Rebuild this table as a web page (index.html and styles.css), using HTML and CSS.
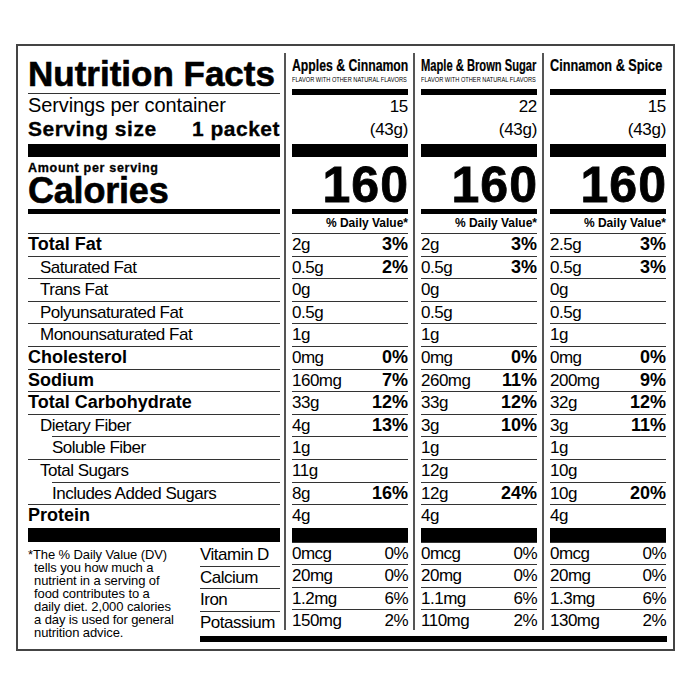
FILE: index.html
```html
<!DOCTYPE html>
<html lang="en">
<head>
<meta charset="utf-8">
<title>Nutrition Facts</title>
<link rel="stylesheet" href="styles.css">
</head>
<body>
<div class="page">
  <div class="label">
    <div class="left-top">
      <h1 class="title">Nutrition Facts</h1>
      <div class="servings">Servings per container</div>
      <div class="size"><span>Serving size</span><span>1 packet</span></div>
      <div class="bar-xl"></div>
      <div class="amount">Amount per serving</div>
      <div class="cal">Calories</div>
      <div class="bar-m"></div>
      <div class="dv-space"></div>
      <div class="row b">Total Fat</div>
      <div class="row i1">Saturated Fat</div>
      <div class="row i1">Trans Fat</div>
      <div class="row i1">Polyunsaturated Fat</div>
      <div class="row i1">Monounsaturated Fat</div>
      <div class="row b">Cholesterol</div>
      <div class="row b">Sodium</div>
      <div class="row b">Total Carbohydrate</div>
      <div class="row i1">Dietary Fiber</div>
      <div class="row i2">Soluble Fiber</div>
      <div class="row i1">Total Sugars</div>
      <div class="row i2">Includes Added Sugars</div>
      <div class="row b">Protein</div>
      <div class="bar-xl bar-end"></div>
    </div>

    <p class="foot">*The % Daily Value (DV)<br>tells you how much a<br>nutrient in a serving of<br>food contributes to a<br>daily diet. 2,000 calories<br>a day is used for general<br>nutrition advice.</p>

    <div class="vit-names">
      <div class="vrow">Vitamin D</div>
      <div class="vrow">Calcium</div>
      <div class="vrow">Iron</div>
      <div class="vrow">Potassium</div>
    </div>

    <div class="bottom-bar"></div>

    <div class="col col1">
      <div class="ch-title"><span>Apples &amp; Cinnamon</span></div>
      <div class="ch-sub"><span>FLAVOR WITH OTHER NATURAL FLAVORS</span></div>
      <div class="bar-s"></div>
      <div class="num">15</div>
      <div class="num">(43g)</div>
      <div class="bar-xl"></div>
      <div class="big">160</div>
      <div class="bar-m"></div>
      <div class="dv">% Daily Value*</div>
      <div class="row"><span>2g</span><b>3%</b></div>
      <div class="row"><span>0.5g</span><b>2%</b></div>
      <div class="row"><span>0g</span></div>
      <div class="row"><span>0.5g</span></div>
      <div class="row"><span>1g</span></div>
      <div class="row"><span>0mg</span><b>0%</b></div>
      <div class="row"><span>160mg</span><b>7%</b></div>
      <div class="row"><span>33g</span><b>12%</b></div>
      <div class="row"><span>4g</span><b>13%</b></div>
      <div class="row"><span>1g</span></div>
      <div class="row"><span>11g</span></div>
      <div class="row"><span>8g</span><b>16%</b></div>
      <div class="row"><span>4g</span></div>
      <div class="bar-xl bar-end"></div>
      <div class="vrow"><span>0mcg</span><span>0%</span></div>
      <div class="vrow"><span>20mg</span><span>0%</span></div>
      <div class="vrow"><span>1.2mg</span><span>6%</span></div>
      <div class="vrow"><span>150mg</span><span>2%</span></div>
    </div>

    <div class="col col2">
      <div class="ch-title"><span>Maple &amp; Brown Sugar</span></div>
      <div class="ch-sub"><span>FLAVOR WITH OTHER NATURAL FLAVORS</span></div>
      <div class="bar-s"></div>
      <div class="num">22</div>
      <div class="num">(43g)</div>
      <div class="bar-xl"></div>
      <div class="big">160</div>
      <div class="bar-m"></div>
      <div class="dv">% Daily Value*</div>
      <div class="row"><span>2g</span><b>3%</b></div>
      <div class="row"><span>0.5g</span><b>3%</b></div>
      <div class="row"><span>0g</span></div>
      <div class="row"><span>0.5g</span></div>
      <div class="row"><span>1g</span></div>
      <div class="row"><span>0mg</span><b>0%</b></div>
      <div class="row"><span>260mg</span><b>11%</b></div>
      <div class="row"><span>33g</span><b>12%</b></div>
      <div class="row"><span>3g</span><b>10%</b></div>
      <div class="row"><span>1g</span></div>
      <div class="row"><span>12g</span></div>
      <div class="row"><span>12g</span><b>24%</b></div>
      <div class="row"><span>4g</span></div>
      <div class="bar-xl bar-end"></div>
      <div class="vrow"><span>0mcg</span><span>0%</span></div>
      <div class="vrow"><span>20mg</span><span>0%</span></div>
      <div class="vrow"><span>1.1mg</span><span>6%</span></div>
      <div class="vrow"><span>110mg</span><span>2%</span></div>
    </div>

    <div class="col col3">
      <div class="ch-title"><span>Cinnamon &amp; Spice</span></div>
      <div class="ch-sub"></div>
      <div class="bar-s"></div>
      <div class="num">15</div>
      <div class="num">(43g)</div>
      <div class="bar-xl"></div>
      <div class="big">160</div>
      <div class="bar-m"></div>
      <div class="dv">% Daily Value*</div>
      <div class="row"><span>2.5g</span><b>3%</b></div>
      <div class="row"><span>0.5g</span><b>3%</b></div>
      <div class="row"><span>0g</span></div>
      <div class="row"><span>0.5g</span></div>
      <div class="row"><span>1g</span></div>
      <div class="row"><span>0mg</span><b>0%</b></div>
      <div class="row"><span>200mg</span><b>9%</b></div>
      <div class="row"><span>32g</span><b>12%</b></div>
      <div class="row"><span>3g</span><b>11%</b></div>
      <div class="row"><span>1g</span></div>
      <div class="row"><span>10g</span></div>
      <div class="row"><span>10g</span><b>20%</b></div>
      <div class="row"><span>4g</span></div>
      <div class="bar-xl bar-end"></div>
      <div class="vrow"><span>0mcg</span><span>0%</span></div>
      <div class="vrow"><span>20mg</span><span>0%</span></div>
      <div class="vrow"><span>1.3mg</span><span>6%</span></div>
      <div class="vrow"><span>130mg</span><span>2%</span></div>
    </div>
  </div>
</div>
</body>
</html>
```

FILE: styles.css
```css
* { box-sizing: border-box; margin: 0; padding: 0; }

body {
  margin: 0;
  background: #fff;
  color: #000;
  font-family: "Liberation Sans", Arial, sans-serif;
}

.page { padding: 44px 0 0 16px; }

.label {
  width: 659px;
  border: 2px solid #444;
  padding: 7px 6px 7px 10px;
  display: grid;
  grid-template-columns: 172px 80px 129px 129px 129px;
  grid-template-rows: auto auto auto;
  grid-template-areas:
    "top top c1 c2 c3"
    "foot vit c1 c2 c3"
    "foot bar bar bar bar";
}

.left-top { grid-area: top; }
.foot { grid-area: foot; }
.vit-names { grid-area: vit; }
.col1 { grid-area: c1; }
.col2 { grid-area: c2; }
.col3 { grid-area: c3; }

.bottom-bar {
  grid-area: bar;
  margin-top: 6px;
  height: 6px;
  background: #000;
}

.bar-xl { height: 13px; background: #000; margin-top: 4px; }
.bar-end { margin-top: 1px; height: 14px; }
.bar-m { height: 5px; background: #000; }
.bar-s { height: 6px; background: #000; margin-top: 5px; }

.title {
  font-size: 35px;
  font-weight: bold;
  line-height: 38px;
  padding-top: 2px;
  height: 41px;
  border-bottom: 1px solid #333;
  white-space: nowrap;
  -webkit-text-stroke: 0.6px #000;
}
.servings {
  font-size: 20px;
  line-height: 23px;
  letter-spacing: -0.1px;
  white-space: nowrap;
}
.size {
  display: flex;
  justify-content: space-between;
  font-size: 21px;
  font-weight: bold;
  line-height: 23px;
  letter-spacing: 0.5px;
  white-space: nowrap;
  -webkit-text-stroke: 0.3px #000;
}
.amount {
  font-size: 12.5px;
  font-weight: bold;
  line-height: 13px;
  height: 13px;
  margin-top: 5px;
  letter-spacing: 0.7px;
  white-space: nowrap;
  -webkit-text-stroke: 0.3px #000;
}
.cal {
  font-size: 36px;
  font-weight: bold;
  line-height: 31px;
  height: 31px;
  margin-bottom: 3px;
  letter-spacing: -0.2px;
  -webkit-text-stroke: 0.6px #000;
}
.dv-space { height: 19px; }

.row {
  height: 22.6px;
  border-top: 1.5px solid #333;
  font-size: 17px;
  line-height: 21px;
  letter-spacing: -0.5px;
  white-space: nowrap;
}
.left-top .row.b {
  font-weight: bold;
  font-size: 18px;
  letter-spacing: 0;
}
.i1 { padding-left: 12px; }
.i2 { margin-left: 24px; }

.foot {
  margin-top: 6px;
  font-size: 13px;
  line-height: 13px;
  padding-left: 6px;
  text-indent: -6px;
  letter-spacing: -0.1px;
  white-space: nowrap;
}

.vrow {
  height: 22.5px;
  border-top: 1.5px solid #333;
  font-size: 17px;
  line-height: 21px;
  letter-spacing: -0.5px;
  white-space: nowrap;
}
.vrow:first-child {
  border-top: 0;
  height: 24px;
  padding-top: 2px;
}
.vrow:last-child { height: 19px; }

.col {
  margin-left: 4px;
  border-left: 2px solid #555;
  padding-left: 6px;
  padding-right: 1px;
  display: flex;
  flex-direction: column;
}
.col .vrow { display: flex; justify-content: space-between; }
.col .row { display: flex; justify-content: space-between; }
.col .row b {
  font-size: 18px;
  letter-spacing: 0;
}

.ch-title {
  font-weight: bold;
  font-size: 16px;
  line-height: 16px;
  margin-top: 5px;
  height: 16px;
  white-space: nowrap;
}
.ch-title span,
.ch-sub span {
  display: inline-block;
  transform-origin: 0 50%;
}
.ch-title span { -webkit-text-stroke: 0.2px #000; }
.col1 .ch-title span { transform: scaleX(0.765); }
.col2 .ch-title span { transform: scaleX(0.698); }
.col3 .ch-title span { transform: scaleX(0.794); }
.ch-sub {
  font-size: 7px;
  line-height: 8px;
  height: 8px;
  margin-top: 2px;
  white-space: nowrap;
}
.ch-sub span { transform: scaleX(0.81); }
.num {
  font-size: 17px;
  line-height: 23px;
  height: 23px;
  text-align: right;
  letter-spacing: -0.3px;
}
.col .bar-xl { margin-top: 3px; }
.col .bar-end { margin-top: 1px; }
.big {
  font-size: 50px;
  font-weight: bold;
  line-height: 48px;
  height: 48px;
  margin-top: 4px;
  text-align: right;
  letter-spacing: 1px;
  margin-right: -1px;
  -webkit-text-stroke: 0.8px #000;
}
.dv {
  font-size: 12px;
  font-weight: bold;
  line-height: 19px;
  height: 19px;
  text-align: right;
  white-space: nowrap;
}
```
